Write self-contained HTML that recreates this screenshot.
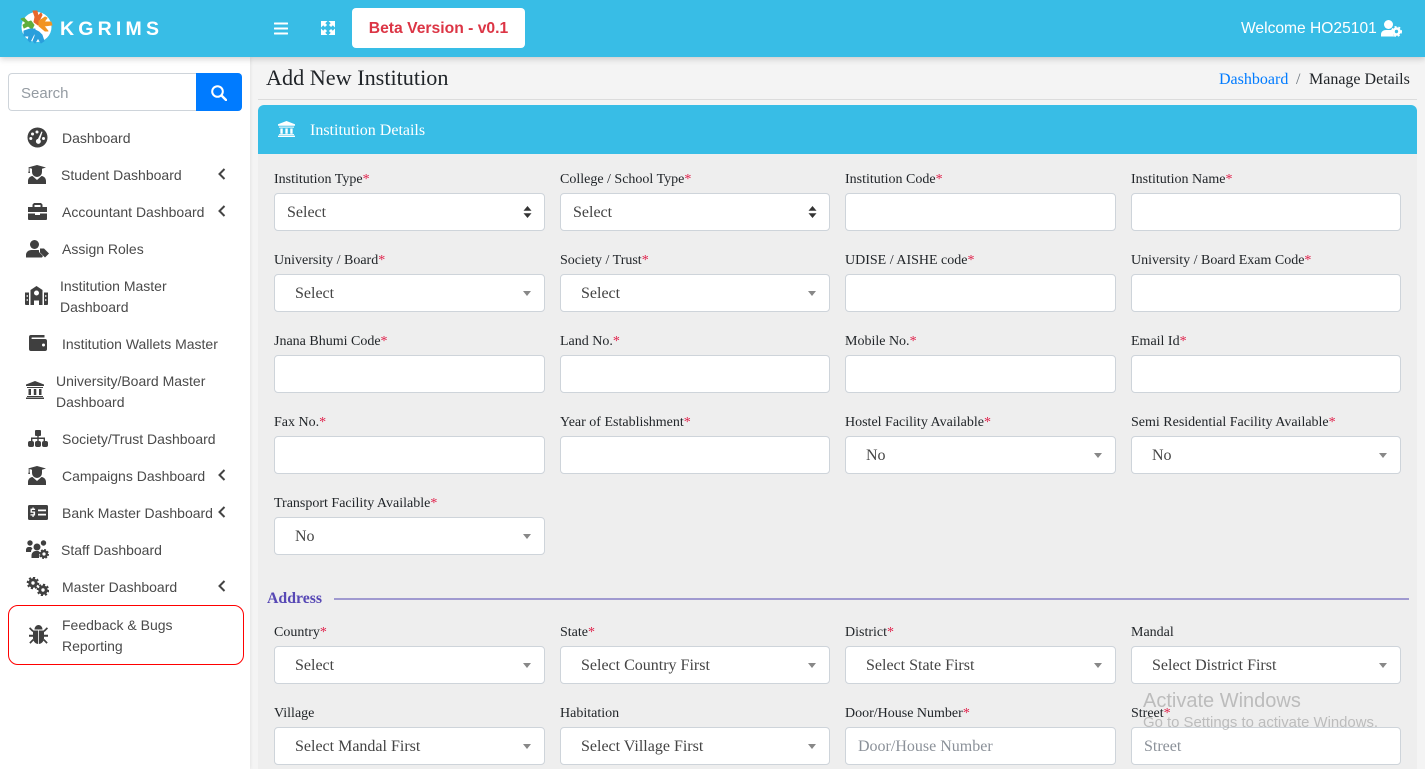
<!DOCTYPE html>
<html><head><meta charset="utf-8"><title>KGRIMS</title>
<style>
*{box-sizing:border-box}
html,body{margin:0;padding:0;width:1425px;height:769px;overflow:hidden;background:#f4f4f4}
body{position:relative;font-family:"Liberation Serif",serif;color:#212529}
.a{position:absolute;white-space:nowrap}
#top{left:0;top:0;width:1425px;height:57px;background:#38bde6;box-shadow:0 2px 6px rgba(0,0,0,.18);z-index:5}
#side{left:0;top:57px;width:250px;height:712px;background:#fff;box-shadow:0 0 4px rgba(0,0,0,.1)}
.m{position:absolute;font:14px/21px "Liberation Sans",sans-serif;color:#4a4a4a;white-space:nowrap}
.i{position:absolute;fill:#3f3f3f}
.c{position:absolute;fill:none;stroke:#444;stroke-width:2;left:218px;width:8px;height:12px}
.l{position:absolute;font-size:14px;line-height:18px;color:#212529;white-space:nowrap;margin-top:2px}
.l b{font-weight:400;color:#e0204a}
.f{position:absolute;height:38px;background:#fff;border:1px solid #ced4da;border-radius:4px;font-size:16px;line-height:38px;color:#444;white-space:nowrap}
.s{padding-left:20px}
.n{padding-left:12px}
.p{padding-left:12px;color:#8b9199}
.f i{position:absolute;right:13px;top:16px;width:0;height:0;border-left:4px solid transparent;border-right:4px solid transparent;border-top:5px solid #888}
</style></head><body>
<div class="a" id="side"></div>
<div class="a" id="top"></div>

<!-- header -->
<svg class="a" style="left:20px;top:10px;z-index:6" width="33" height="34" viewBox="0 0 33 34" stroke-width="1" stroke-linejoin="round">
<circle cx="16.500" cy="17" r="15" fill="#fff"/>
<path d="M13 1l4 0 1 5 3-3 1 2-3 6-1 4-4-3 1-5z" fill="#e8682c" stroke="#e8682c"/>
<path d="M19 11l6-4 2 1-3 4 7 0 1 3-8 1 4 5-3 0-6-5z" fill="#f29422" stroke="#f29422"/>
<path d="M1 9l3-1 4 4 3-1 3 4-2 4-4-3-4 2-1-3 3-2z" fill="#5fae3c" stroke="#5fae3c"/>
<path d="M4 21l6-2 5 0-1 5-4 8-2-2 1-4-5 0z" fill="#2a9fdc" stroke="#2a9fdc"/>
<path d="M15 20l4 2 3 3 2 6-3 2-3-5-3 5-2-2 2-5z" fill="#2a9fdc" stroke="#2a9fdc"/>
</svg>
<div class="a" style="left:60px;top:16px;font:700 19.500px/26px 'Liberation Sans',sans-serif;letter-spacing:4.200px;color:#fff;z-index:6">KGRIMS</div>
<svg class="a" style="left:274px;top:22px;z-index:6" width="14" height="13" viewBox="0 0 14 13" fill="#fff"><rect width="14" height="2" y="0.500" rx=".5"/><rect width="14" height="2" y="5.500" rx=".5"/><rect width="14" height="2" y="10.500" rx=".5"/></svg>
<svg class="a" style="left:321px;top:21px;z-index:6" width="14" height="14" viewBox="0 0 14 14" fill="#fff" stroke="#fff" stroke-width="3"><path stroke="none" d="M0 0h6.500L0 6.500zM14 0v6.500L7.500 0zM0 14V7.500L6.500 14zM14 14H7.500L14 7.500z"/><path d="M2 2l3 3M12 2L9 5M2 12l3-3M12 12L9 9"/></svg>
<div class="a" style="left:352px;top:8px;width:173px;height:40px;background:#fff;border-radius:4px;text-align:center;font:700 15.700px/42px 'Liberation Sans',sans-serif;color:#dc3545;z-index:6">Beta Version - v0.1</div>
<div class="a" style="left:1241px;top:18px;font:15.600px/21px 'Liberation Sans',sans-serif;color:#fff;z-index:6">Welcome HO25101</div>
<svg class="a" style="left:1381px;top:20px;z-index:6" width="21" height="17" viewBox="0 0 21 17" fill="#fff"><circle cx="7.500" cy="4.500" r="4.500"/><path d="M0 16.500v-2C0 11.500 2.500 10 5 10h5c1 0 2 .3 2.600.8-.6 1.600-.4 4 .7 5.700z"/><circle cx="15.500" cy="11.500" r="3" fill="none" stroke="#fff" stroke-width="2.600"/><circle cx="15.500" cy="11.500" r="4.700" fill="none" stroke="#fff" stroke-width="1.600" stroke-dasharray="2 2"/></svg>

<!-- search -->
<div class="a" style="left:8px;top:73px;width:189px;height:38px;background:#fff;border:1px solid #ced4da;border-right:0;border-radius:4px 0 0 4px;font:15px/39px 'Liberation Sans',sans-serif;color:#949ba2;padding-left:12px">Search</div>
<div class="a" style="left:196px;top:73px;width:46px;height:38px;background:#007bff;border-radius:0 4px 4px 0"></div>
<svg class="a" style="left:211px;top:85px" width="16" height="16" viewBox="0 0 16 16" fill="none" stroke="#fff" stroke-width="2"><circle cx="6.500" cy="6.500" r="5.300"/><path d="M10.500 10.500L15 15" stroke-linecap="round" stroke-width="2.400"/></svg>

<!-- sidebar -->
<svg class="i" style="left:27px;top:127px" width="21" height="21" viewBox="0 0 21 21"><path fill-rule="evenodd" d="M10.500 .5a10 10 0 1 0 0 20 10 10 0 0 0 0-20zM10 3.500a1.500 1.500 0 1 1 0 3 1.500 1.500 0 0 1 0-3zM5.500 5.500a1.500 1.500 0 1 1 0 3 1.500 1.500 0 0 1 0-3zM3.800 10a1.500 1.500 0 1 1 0 3 1.500 1.500 0 0 1 0-3zM16.500 10a1.500 1.500 0 1 1 0 3 1.500 1.500 0 0 1 0-3zM14.500 4.500l1 .4-2.500 7.600a2.500 2.500 0 1 1-2 -.6z"/></svg>
<div class="m" style="left:62px;top:128px">Dashboard</div>

<svg class="i" style="left:28px;top:165px" width="18" height="19" viewBox="0 0 18 19"><path d="M9 0l9 2.500-4 1.200V7a5 5 0 0 1-10 0V3.700L1.600 3v3l.5 2H.2l.5-2V2.600L0 2.500z"/><path d="M4.500 11L9 15l4.500-4c2.500.2 4.500 2.300 4.500 5v3H0v-3c0-2.700 2-4.800 4.500-5z"/></svg>
<div class="m" style="left:61px;top:165px">Student Dashboard</div>
<svg class="c" style="top:168px" viewBox="0 0 8 12"><path d="M6.500 1L1.500 6l5 5"/></svg>

<svg class="i" style="left:28px;top:203px" width="19" height="17" viewBox="0 0 19 17"><path fill-rule="evenodd" d="M6 0h7l1.500 1.500V4H19v5H0V4h4.500V1.500zM6.500 2v2h6V2zM0 10.500h7V12h5v-1.500h7V16a1 1 0 0 1-1 1H1a1 1 0 0 1-1-1z"/></svg>
<div class="m" style="left:62px;top:202px">Accountant Dashboard</div>
<svg class="c" style="top:205px" viewBox="0 0 8 12"><path d="M6.500 1L1.500 6l5 5"/></svg>

<svg class="i" style="left:26px;top:240px" width="23" height="18" viewBox="0 0 23 18"><circle cx="8.500" cy="4.500" r="4.500"/><path d="M0 17.500v-2.500C0 12 2.500 10 5.500 10h6c.5 0 1 0 1.500.2V12l4 4-1 1.500z"/><path d="M14 8.500h4l5 5-4 4-5-5z"/></svg>
<div class="m" style="left:62px;top:239px">Assign Roles</div>

<svg class="i" style="left:25px;top:286px" width="23" height="19" viewBox="0 0 23 19"><path fill-rule="evenodd" d="M11.500 0l6 4v15h-3.500v-4.500H9V19H5.500V4zM11.500 4.500a2.500 2.500 0 1 0 0 5 2.500 2.500 0 0 0 0-5zM0 6.500h4V19H1a1 1 0 0 1-1-1zM19 6.500h4V18a1 1 0 0 1-1 1h-3zM1.700 9v2h1V9zM1.700 13v2h1v-2zM20.300 9v2h1V9zM20.300 13v2h1v-2z"/></svg>
<div class="m" style="left:60px;top:276px">Institution Master<br>Dashboard</div>

<svg class="i" style="left:29px;top:335px" width="18" height="16" viewBox="0 0 18 16"><path fill-rule="evenodd" d="M2 0h13.500v2.500H3a.8.8 0 0 0 0 1.500h13a2 2 0 0 1 2 2v8a2 2 0 0 1-2 2H2a2 2 0 0 1-2-2V2a2 2 0 0 1 2-2zM14.500 8.500a1.500 1.500 0 1 0 0 3 1.500 1.500 0 0 0 0-3z"/></svg>
<div class="m" style="left:62px;top:334px">Institution Wallets Master</div>

<svg class="i" style="left:26px;top:381px" width="18" height="18" viewBox="0 0 18 18"><path d="M9 0l9 3.500V5H0V3.500zM1 6h16v1H1zM2.500 8h2.500v6H2.500zM7.800 8h2.500v6H7.800zM13 8h2.500v6H13zM1 15h16v1H1zM0 16.500h18V18H0z"/></svg>
<div class="m" style="left:56px;top:371px">University/Board Master<br>Dashboard</div>

<svg class="i" style="left:28px;top:430px" width="20" height="17" viewBox="0 0 20 17"><rect x="7" y="0" width="6" height="6" rx="1"/><rect x="0" y="11" width="6" height="6" rx="2"/><rect x="7" y="11" width="6" height="6" rx="2"/><rect x="14" y="11" width="6" height="6" rx="2"/><path d="M9.300 5h1.400v2.500H17V11h-1.400V9H10.700v2H9.300V9H4.400v2H3V7.500h6.300z"/></svg>
<div class="m" style="left:62px;top:429px">Society/Trust Dashboard</div>

<svg class="i" style="left:28px;top:466px" width="18" height="19" viewBox="0 0 18 19"><path d="M9 0l9 2.500-4 1.200V7a5 5 0 0 1-10 0V3.700L1.600 3v3l.5 2H.2l.5-2V2.600L0 2.500z"/><path d="M4.500 11L9 15l4.500-4c2.500.2 4.500 2.300 4.500 5v3H0v-3c0-2.700 2-4.800 4.500-5z"/></svg>
<div class="m" style="left:62px;top:466px">Campaigns Dashboard</div>
<svg class="c" style="top:469px" viewBox="0 0 8 12"><path d="M6.500 1L1.500 6l5 5"/></svg>

<svg class="i" style="left:28px;top:505px" width="20" height="15" viewBox="0 0 20 15"><path fill-rule="evenodd" d="M1.500 0h17A1.500 1.500 0 0 1 20 1.500v12a1.500 1.500 0 0 1-1.500 1.500h-17A1.500 1.500 0 0 1 0 13.500v-12A1.500 1.500 0 0 1 1.500 0zM10 4.500V6.300h8V4.500zM10 8.700v1.800h8V8.700zM4.400 2.500v1.100H2.500v4.200h3v1.400h-3v1.300h1.900v1.500h1.300v-1.500h1.400V6.500H3.900V5h3.200V3.600H5.700V2.500z"/></svg>
<div class="m" style="left:62px;top:503px">Bank Master Dashboard</div>
<svg class="c" style="top:506px" viewBox="0 0 8 12"><path d="M6.500 1L1.500 6l5 5"/></svg>

<svg class="i" style="left:26px;top:540px" width="23" height="19" viewBox="0 0 23 19"><circle cx="4" cy="3" r="2.700"/><circle cx="17.500" cy="3" r="2.700"/><circle cx="11" cy="7" r="3.500"/><path d="M0 12v-2c0-1.500 1-3 2.500-3H5l1.500 1.500C5.500 9.500 5 10.700 5 12zM5.500 18v-2.500c0-2.500 2-4.500 4-4.500h3l1 1-.5 6z"/><circle cx="18" cy="14" r="2.800" fill="none" stroke="#3f3f3f" stroke-width="2.400"/><circle cx="18" cy="14" r="4.200" fill="none" stroke="#3f3f3f" stroke-width="1.600" stroke-dasharray="1.800 1.500"/></svg>
<div class="m" style="left:61px;top:540px">Staff Dashboard</div>

<svg class="i" style="left:26px;top:577px" width="23" height="19" viewBox="0 0 23 19"><circle cx="7" cy="6" r="3.200" fill="none" stroke="#3f3f3f" stroke-width="3"/><circle cx="7" cy="6" r="5.400" fill="none" stroke="#3f3f3f" stroke-width="1.800" stroke-dasharray="2.200 2"/><circle cx="17" cy="13" r="3.200" fill="none" stroke="#3f3f3f" stroke-width="3"/><circle cx="17" cy="13" r="5.400" fill="none" stroke="#3f3f3f" stroke-width="1.800" stroke-dasharray="2.200 2"/></svg>
<div class="m" style="left:62px;top:577px">Master Dashboard</div>
<svg class="c" style="top:580px" viewBox="0 0 8 12"><path d="M6.500 1L1.500 6l5 5"/></svg>

<div class="a" style="left:8px;top:605px;width:236px;height:60px;border:1px solid #f00;border-radius:10px"></div>
<svg class="i" style="left:29px;top:625px" width="19" height="19" viewBox="0 0 19 19"><path d="M5.500 4.500C5.500 2 7.300 0 9.500 0s4 2 4 4.500z"/><path d="M4 5.500h5.100V19C6 18.700 4 16 4 13zM9.900 5.500H15V13c0 3-2 5.700-5.100 6z"/><path d="M0 3.500l1.200-1.200 3.500 3.500-1.200 1.200zM19 3.500l-1.200-1.200-3.500 3.500 1.200 1.200zM0 9.800h4v2H0zM15 9.800h4v2h-4zM3.700 14l1.200 1.200-3.400 3.500L.3 17.500zM15.300 14l-1.200 1.200 3.400 3.500 1.200-1.200z"/></svg>
<div class="m" style="left:62px;top:615px">Feedback &amp; Bugs<br>Reporting</div>

<!-- page title -->
<div class="a" style="left:266px;top:64px;font-size:22.200px;line-height:28px;color:#212529">Add New Institution</div>
<div class="a" style="left:1219px;top:70px;font-size:16px;line-height:20px;color:#007bff">Dashboard</div>
<div class="a" style="left:1296px;top:70px;font-size:16px;line-height:20px;color:#6c757d">/</div>
<div class="a" style="left:1309px;top:70px;font-size:16px;line-height:20px;color:#212529">Manage Details</div>
<div class="a" style="left:258px;top:99px;width:1159px;height:1px;background:#dcdcdc"></div>

<!-- card -->
<div class="a" style="left:258px;top:105px;width:1159px;height:664px;background:#eee;border-radius:6px 6px 0 0"></div>
<div class="a" style="left:258px;top:105px;width:1159px;height:49px;background:#38bde6;border-radius:6px 6px 0 0"></div>
<svg class="a" style="left:278px;top:121px" width="17" height="16" viewBox="0 0 18 17" fill="#fff"><path d="M9 0l9 3.500V5H0V3.500zM1 6h16v1H1zM2.500 8h2.500v5.500H2.500zM7.800 8h2.500v5.500H7.800zM13 8h2.500v5.500H13zM1 14h16v1H1zM0 15.500h18V17H0z"/></svg>
<div class="a" style="left:310px;top:121px;font-size:16px;line-height:20px;color:#fff">Institution Details</div>

<!-- row 1 -->
<div class="l" style="left:274px;top:169px">Institution Type<b>*</b></div>
<div class="l" style="left:560px;top:169px">College / School Type<b>*</b></div>
<div class="l" style="left:845px;top:169px">Institution Code<b>*</b></div>
<div class="l" style="left:1131px;top:169px">Institution Name<b>*</b></div>
<div class="f n" style="left:274px;top:193px;width:271px">Select<svg class="a" style="right:12px;top:12px" width="9" height="12" viewBox="0 0 9 12" fill="#333"><path d="M4.500 0l4 4.700H.5zM4.500 12l-4-4.700h8z"/></svg></div>
<div class="f n" style="left:560px;top:193px;width:270px">Select<svg class="a" style="right:12px;top:12px" width="9" height="12" viewBox="0 0 9 12" fill="#333"><path d="M4.500 0l4 4.700H.5zM4.500 12l-4-4.700h8z"/></svg></div>
<div class="f" style="left:845px;top:193px;width:271px"></div>
<div class="f" style="left:1131px;top:193px;width:270px"></div>

<!-- row 2 -->
<div class="l" style="left:274px;top:250px">University / Board<b>*</b></div>
<div class="l" style="left:560px;top:250px">Society / Trust<b>*</b></div>
<div class="l" style="left:845px;top:250px">UDISE / AISHE code<b>*</b></div>
<div class="l" style="left:1131px;top:250px">University / Board Exam Code<b>*</b></div>
<div class="f s" style="left:274px;top:274px;width:271px">Select<i></i></div>
<div class="f s" style="left:560px;top:274px;width:270px">Select<i></i></div>
<div class="f" style="left:845px;top:274px;width:271px"></div>
<div class="f" style="left:1131px;top:274px;width:270px"></div>

<!-- row 3 -->
<div class="l" style="left:274px;top:331px">Jnana Bhumi Code<b>*</b></div>
<div class="l" style="left:560px;top:331px">Land No.<b>*</b></div>
<div class="l" style="left:845px;top:331px">Mobile No.<b>*</b></div>
<div class="l" style="left:1131px;top:331px">Email Id<b>*</b></div>
<div class="f" style="left:274px;top:355px;width:271px"></div>
<div class="f" style="left:560px;top:355px;width:270px"></div>
<div class="f" style="left:845px;top:355px;width:271px"></div>
<div class="f" style="left:1131px;top:355px;width:270px"></div>

<!-- row 4 -->
<div class="l" style="left:274px;top:412px">Fax No.<b>*</b></div>
<div class="l" style="left:560px;top:412px">Year of Establishment<b>*</b></div>
<div class="l" style="left:845px;top:412px">Hostel Facility Available<b>*</b></div>
<div class="l" style="left:1131px;top:412px">Semi Residential Facility Available<b>*</b></div>
<div class="f" style="left:274px;top:436px;width:271px"></div>
<div class="f" style="left:560px;top:436px;width:270px"></div>
<div class="f s" style="left:845px;top:436px;width:271px">No<i></i></div>
<div class="f s" style="left:1131px;top:436px;width:270px">No<i></i></div>

<!-- row 5 -->
<div class="l" style="left:274px;top:493px">Transport Facility Available<b>*</b></div>
<div class="f s" style="left:274px;top:517px;width:271px">No<i></i></div>

<!-- address -->
<div class="a" style="left:267px;top:590px;font-size:15.800px;font-weight:700;line-height:18px;color:#5748b5">Address</div>
<div class="a" style="left:334px;top:598px;width:1075px;height:2px;background:#a09ad0"></div>

<div class="l" style="left:274px;top:622px">Country<b>*</b></div>
<div class="l" style="left:560px;top:622px">State<b>*</b></div>
<div class="l" style="left:845px;top:622px">District<b>*</b></div>
<div class="l" style="left:1131px;top:622px">Mandal</div>
<div class="f s" style="left:274px;top:646px;width:271px">Select<i></i></div>
<div class="f s" style="left:560px;top:646px;width:270px">Select Country First<i></i></div>
<div class="f s" style="left:845px;top:646px;width:271px">Select State First<i></i></div>
<div class="f s" style="left:1131px;top:646px;width:270px">Select District First<i></i></div>

<div class="l" style="left:274px;top:703px">Village</div>
<div class="l" style="left:560px;top:703px">Habitation</div>
<div class="l" style="left:845px;top:703px">Door/House Number<b>*</b></div>
<div class="l" style="left:1131px;top:703px">Street<b>*</b></div>
<div class="f s" style="left:274px;top:727px;width:271px">Select Mandal First<i></i></div>
<div class="f s" style="left:560px;top:727px;width:270px">Select Village First<i></i></div>
<div class="f p" style="left:845px;top:727px;width:271px">Door/House Number</div>
<div class="f p" style="left:1131px;top:727px;width:270px">Street</div>

<!-- watermark -->
<div class="a" style="left:1143px;top:688px;font:20px/26px 'Liberation Sans',sans-serif;color:rgba(120,120,120,.42);z-index:8">Activate Windows</div>
<div class="a" style="left:1143px;top:714px;font:14.900px/18px 'Liberation Sans',sans-serif;color:rgba(120,120,120,.42);z-index:8">Go to Settings to activate Windows.</div>
</body></html>
